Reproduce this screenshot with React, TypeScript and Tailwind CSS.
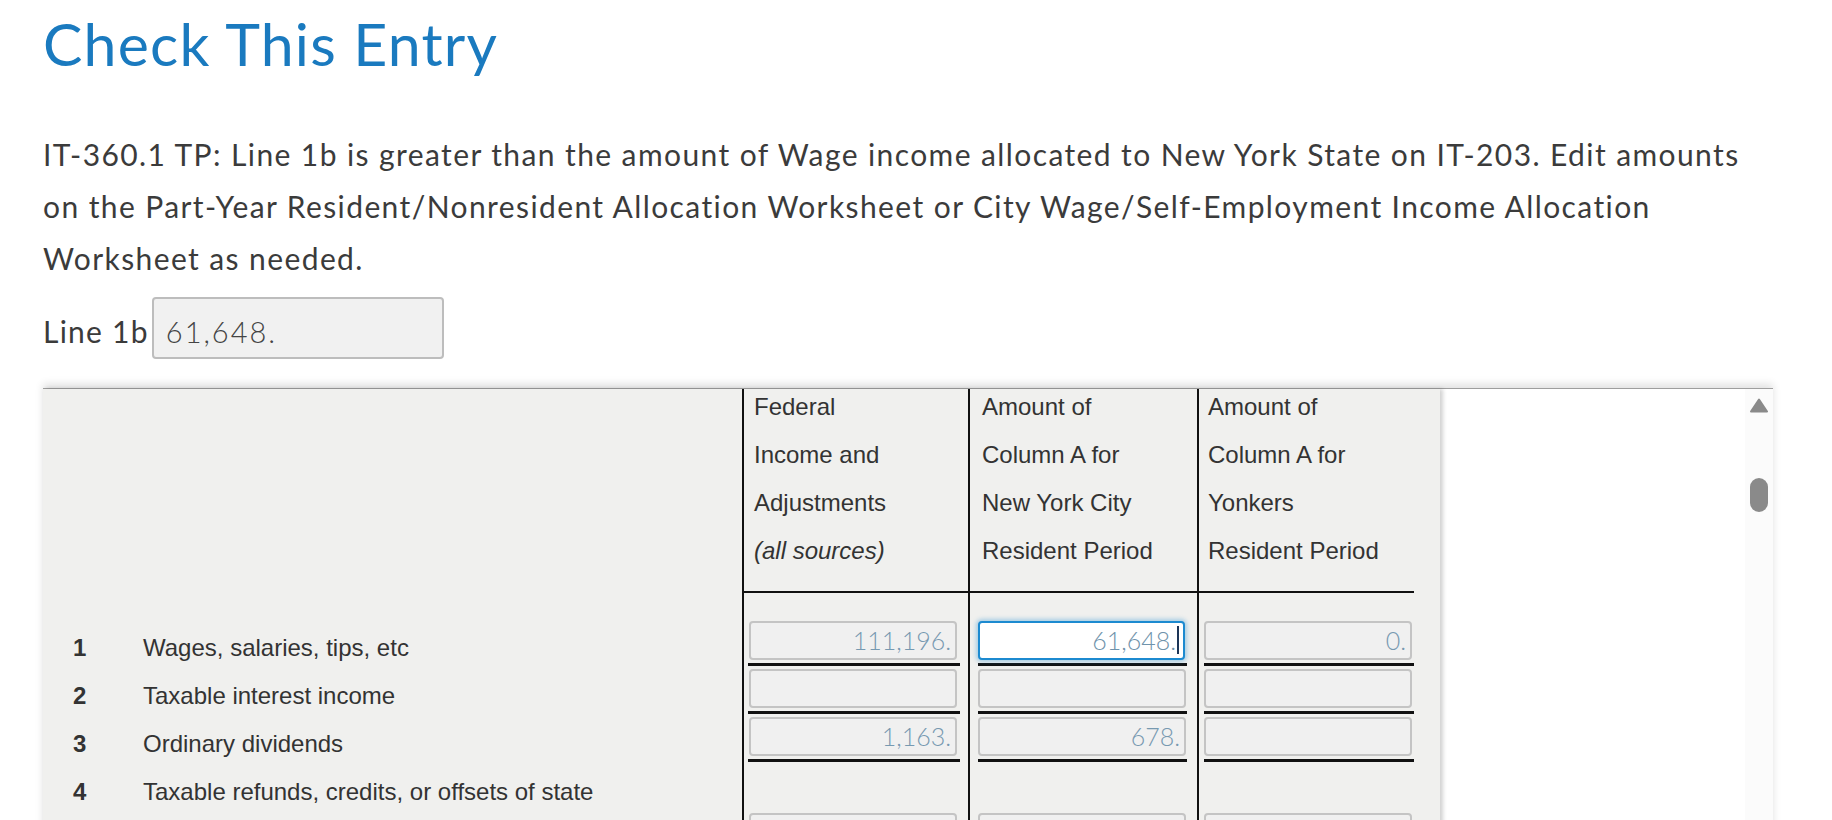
import React from "react";

const lato = "font-['Lato','Noto_Sans',sans-serif]";

function Val({ v, focused }: { v: string; focused?: boolean }) {
  if (focused) {
    return (
      <div className="flex h-[39px] w-[207px] items-center justify-end rounded-[4px] border-2 border-[#1c8ad0] bg-white pr-[4px] shadow-[0_0_4px_2px_rgba(28,138,208,0.35)]">
        <span className={`${lato} text-[25px] font-light text-[#6f93ab]`}>{v}</span>
        <span className="ml-[1px] inline-block h-[28px] w-[2px] bg-[#1d3557]" />
      </div>
    );
  }
  return (
    <div className="flex h-[39px] w-[208px] items-center justify-end rounded-[4px] border-2 border-[#c4c4c4] bg-[#f0f0f0] pr-[4px]">
      <span className={`${lato} text-[25px] font-light text-[#7799b0]`}>{v}</span>
    </div>
  );
}

type RowData = { n: string; label: string; a?: string; b?: string; c?: string; tall?: boolean; focusB?: boolean };

const rows: RowData[] = [
  { n: "1", label: "Wages, salaries, tips, etc", a: "111,196.", b: "61,648.", c: "0.", focusB: true },
  { n: "2", label: "Taxable interest income" },
  { n: "3", label: "Ordinary dividends", a: "1,163.", b: "678." },
  { n: "4", label: "Taxable refunds, credits, or offsets of state", tall: true },
];

function Row({ r }: { r: RowData }) {
  const h = r.tall ? "h-[96px]" : "h-[48px]";
  const top = r.tall ? "pt-[51px]" : "pt-[3px]";
  return (
    <div className={`flex ${h}`}>
      <div className="flex w-[699px] pl-[30px] pt-[6px] leading-[48px]">
        <div className="w-[70px] font-bold">{r.n}</div>
        <div>{r.label}</div>
      </div>
      <div className="w-[226px] border-l-2 border-[#111] pl-[4px]">
        <div className={`w-[212px] ${top} border-b-[3px] border-[#111] pb-[3px]`}>
          <div className="ml-[1px]">
            <Val v={r.a ?? ""} />
          </div>
        </div>
      </div>
      <div className="w-[229px] border-l-2 border-[#111] pl-[8px]">
        <div className={`w-[209px] ${top} border-b-[3px] border-[#111] pb-[3px]`}>
          <Val v={r.b ?? ""} focused={r.focusB} />
        </div>
      </div>
      <div className="w-[243px] border-l-2 border-[#111] pl-[5px]">
        <div className={`w-[210px] ${top} border-b-[3px] border-[#111] pb-[3px]`}>
          <Val v={r.c ?? ""} />
        </div>
      </div>
    </div>
  );
}

function HeadText({ lines }: { lines: React.ReactNode[] }) {
  return (
    <div className="-mt-[6px] flex flex-col leading-[48px]">
      {lines.map((l, i) => (
        <div key={i}>{l}</div>
      ))}
    </div>
  );
}

export default function App() {
  return (
    <div className="h-[820px] w-[1832px] overflow-hidden bg-white">
      <div className="pl-[43px]">
        <h1 className={`${lato} pt-[9px] text-[59px] leading-[1.2] font-normal tracking-[1.2px] text-[#1a7abf]`}>Check This Entry</h1>
        <p className={`${lato} mt-[48px] whitespace-nowrap text-[30px] leading-[52px] tracking-[1.4px] text-[#3b3b3b]`}>
          IT-360.1 TP: Line 1b is greater than the amount of Wage income allocated to New York State on IT-203. Edit amounts
          <br />
          on the Part-Year Resident/Nonresident Allocation Worksheet or City Wage/Self-Employment Income Allocation
          <br />
          Worksheet as needed.
        </p>
        <div className="mt-[13px] flex h-[62px] items-center">
          <span className={`${lato} pt-2 text-[30px] tracking-[1.25px] text-[#3b3b3b]`}>Line 1b</span>
          <div className="ml-[3px] flex h-[62px] w-[292px] items-center rounded-[4px] border-2 border-[#bdbdbd] bg-[#f1f1f1] pl-[12px] pt-2">
            <span className={`${lato} text-[29px] font-light tracking-[2px] text-[#444]`}>61,648.</span>
          </div>
        </div>

        <div className="mt-[29px] flex w-[1730px] border-t border-[#9e9e9e] bg-white shadow-[0_-4px_8px_rgba(0,0,0,0.12)]">
          <div className="w-[1397px] bg-[#f0f0ee] font-['Liberation_Sans',Arial,sans-serif] text-[24px] text-[#333] shadow-[3px_0_4px_rgba(0,0,0,0.18)]">
            <div className="flex h-[204px]">
              <div className="w-[699px]" />
              <div className="flex w-[226px] flex-col border-b-2 border-l-2 border-[#111] pl-[10px]">
                <HeadText lines={["Federal", "Income and", "Adjustments", <span className="italic">(all sources)</span>]} />
              </div>
              <div className="flex w-[229px] flex-col border-b-2 border-l-2 border-[#111] pl-[12px]">
                <HeadText lines={["Amount of", "Column A for", "New York City", "Resident Period"]} />
              </div>
              <div className="flex w-[243px]">
                <div className="flex h-full w-[217px] flex-col border-b-2 border-l-2 border-[#111] pl-[9px]">
                  <HeadText lines={["Amount of", "Column A for", "Yonkers", "Resident Period"]} />
                </div>
              </div>
            </div>
            <div className="flex h-[25px]">
              <div className="w-[699px]" />
              <div className="w-[226px] border-l-2 border-[#111]" />
              <div className="w-[229px] border-l-2 border-[#111]" />
              <div className="w-[243px] border-l-2 border-[#111]" />
            </div>
            {rows.map((r) => (
              <Row key={r.n} r={r} />
            ))}
          </div>
          <div className="flex-1" />
          <div className="flex w-[28px] flex-col items-center bg-[#fbfbfb]">
            <svg className="mt-[9px]" width="18" height="15" viewBox="0 0 18 15">
              <path d="M9 1.5 L17 13.5 L1 13.5 Z" fill="#8a8a8a" stroke="#8a8a8a" strokeWidth="2" strokeLinejoin="round" />
            </svg>
            <div className="mt-[65px] h-[34px] w-[18px] rounded-full bg-[#8a8a8a]" />
          </div>
        </div>
      </div>
    </div>
  );
}
